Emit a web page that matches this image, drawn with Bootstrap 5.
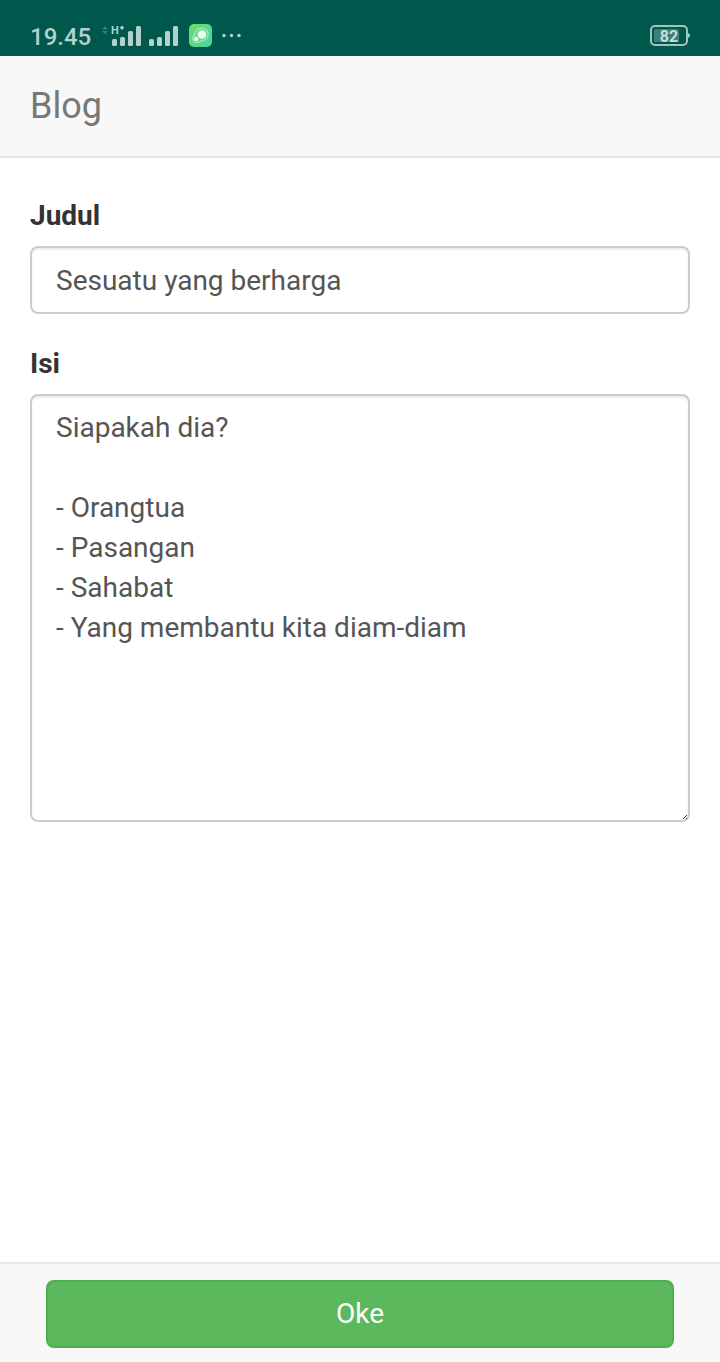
<!DOCTYPE html>
<html lang="id">
<head>
<meta charset="utf-8">
<meta name="viewport" content="width=device-width, initial-scale=1">
<title>Blog</title>
<link href="https://cdn.jsdelivr.net/npm/bootstrap@5.3.0/dist/css/bootstrap.min.css" rel="stylesheet">
<style>
  body { font-family: Roboto, "Liberation Sans", sans-serif; font-size: 28px; line-height: 40px; color: #333; background: #fff; }
  .status-bar { height: 56px; padding: 16px 30px 0; background: #00574b; color: #b2d1cc; }
  .clock { font-size: 24px; font-weight: 500; line-height: 42px; width: 72px; }
  .status-icons, .battery { height: 40px; display: block; }
  .top-nav { background: #f8f8f8; border-bottom: 2px solid #e7e7e7; padding: 30px; }
  .top-nav .navbar-brand { font-size: 36px; line-height: 40px; color: #777; padding: 0; margin: 0; }
  .page-main { padding: 38px 30px 0; }
  .form-label { font-weight: 700; margin-bottom: 10px; display: block; }
  .field-group { margin-bottom: 30px; }
  .form-control, .form-control:focus { font-size: 28px; line-height: 40px; padding: 12px 24px; color: #555; background: #fff; border: 2px solid #ccc; border-radius: 8px; box-shadow: inset 0 2px 2px rgba(0,0,0,.075); }
  input.form-control, input.form-control:focus { padding: 13px 24px 11px; }
  textarea.form-control { display: block; resize: vertical; }
  textarea.form-control::-webkit-resizer { background: url("data:image/svg+xml,%3Csvg xmlns='http://www.w3.org/2000/svg' width='6' height='6'%3E%3Cpath d='M1 5L5 1M4 5L5 4' stroke='%23444'/%3E%3C/svg%3E") no-repeat right bottom; }
  .bottom-bar { background: #f8f8f8; border-top: 2px solid #e7e7e7; padding: 16px 46px 14px; }
  .btn-oke { --bs-btn-color: #fff; --bs-btn-bg: #5cb85c; --bs-btn-border-color: #4cae4c; --bs-btn-hover-color: #fff; --bs-btn-hover-bg: #449d44; --bs-btn-hover-border-color: #398439; --bs-btn-active-color: #fff; --bs-btn-active-bg: #449d44; font-size: 28px; line-height: 40px; padding: 12px 24px; border-width: 2px; border-radius: 8px; }
</style>
</head>
<body class="d-flex flex-column min-vh-100">
<div class="status-bar d-flex">
  <span class="clock">19.45</span>
  <svg class="status-icons" width="144" height="40" viewBox="102 16 144 40" aria-hidden="true">
    <defs><linearGradient id="appGreen" x1="0" y1="0" x2="1" y2="1"><stop offset="0" stop-color="#6fdc6b"/><stop offset="1" stop-color="#48d3a8"/></linearGradient></defs>
    <g fill="#3a7f74"><path d="M102 29.500l3-3.500 3 3.500z"/><path d="M102 31l3 3.500 3-3.500z"/></g>
    <text x="111" y="34" font-size="11" font-weight="700" fill="#b2d1cc">H</text>
    <path d="M122 25.500l2.200 2.300-2.200 2.300-2.200-2.300z" fill="#b2d1cc"/>
    <g fill="#b2d1cc">
      <rect x="112" y="39" width="5" height="7" rx="1.500"/><rect x="120" y="37" width="5" height="9" rx="1.500"/><rect x="128" y="31" width="5" height="15" rx="1.500"/><rect x="136" y="26" width="5" height="20" rx="1.500"/>
      <rect x="149" y="39" width="5" height="7" rx="1.500"/><rect x="157" y="37" width="5" height="9" rx="1.500"/><rect x="165" y="31" width="5" height="15" rx="1.500"/><rect x="173" y="26" width="5" height="20" rx="1.500"/>
      <circle cx="224" cy="35.500" r="1.700"/><circle cx="231.500" cy="35.500" r="1.700"/><circle cx="239" cy="35.500" r="1.700"/>
    </g>
    <rect x="189" y="24" width="23" height="23" rx="5" fill="url(#appGreen)"/>
    <path d="M195.500 32C197.500 27.500 205 27 207.300 31C209.500 36 207 39.500 203.500 40.300L197.500 42.300C194 43.300 191.800 40 193.300 37.200Z" fill="none" stroke="#d5f7df" stroke-width=".8"/>
    <circle cx="202" cy="34.500" r="4.300" fill="#effdf1"/><circle cx="196.200" cy="39" r="2.200" fill="#effdf1"/>
  </svg>
  <svg class="battery ms-auto" width="40" height="40" viewBox="650 16 40 40" role="img" aria-label="82">
    <rect x="651" y="26" width="36" height="19" rx="4" fill="none" stroke="#9fc5bf" stroke-width="2"/>
    <path d="M688 33c3 1 3 4 0 5z" fill="#9fc5bf"/>
    <rect x="654" y="29" width="25" height="13" rx="1.500" fill="#3d8176"/>
    <text x="669" y="42" text-anchor="middle" font-size="16" font-weight="700" fill="#c5dfdb">82</text>
  </svg>
</div>
<nav class="navbar top-nav"><a class="navbar-brand" href="#">Blog</a></nav>
<form class="d-flex flex-column flex-grow-1">
  <main class="page-main flex-grow-1">
    <div class="field-group">
      <label class="form-label" for="judul">Judul</label>
      <input type="text" class="form-control" id="judul" value="Sesuatu yang berharga">
    </div>
    <div class="field-group">
      <label class="form-label" for="isi">Isi</label>
      <textarea class="form-control" id="isi" rows="10">Siapakah dia?

- Orangtua
- Pasangan
- Sahabat
- Yang membantu kita diam-diam</textarea>
    </div>
  </main>
  <footer class="bottom-bar">
    <button type="button" class="btn btn-oke w-100 d-block">Oke</button>
  </footer>
</form>
<script src="https://cdn.jsdelivr.net/npm/bootstrap@5.3.0/dist/js/bootstrap.bundle.min.js"></script>
</body>
</html>
